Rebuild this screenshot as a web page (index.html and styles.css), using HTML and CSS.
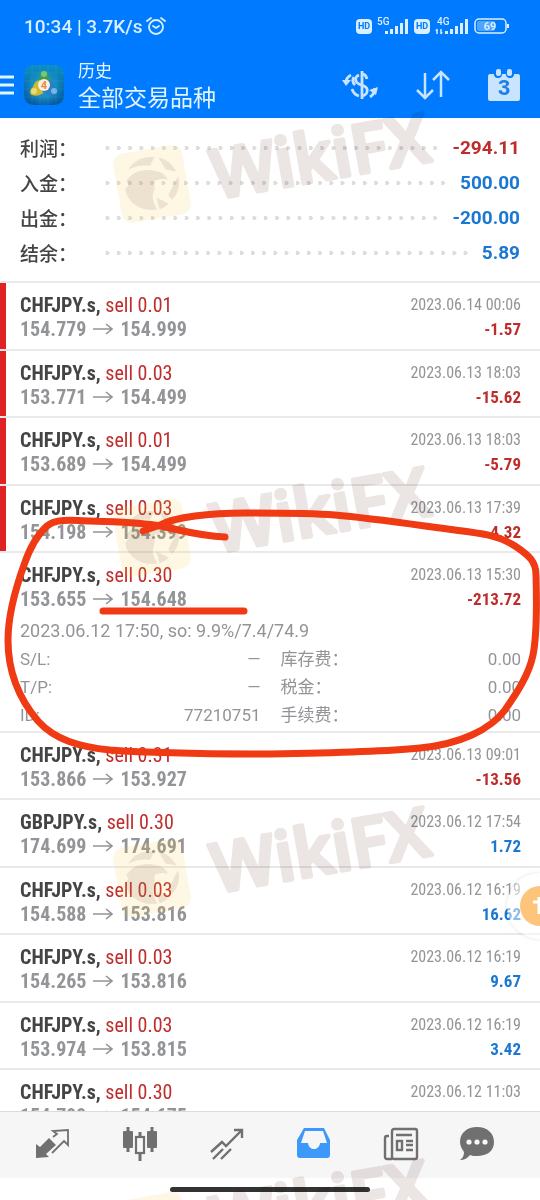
FILE: index.html
```
<!DOCTYPE html>
<html lang="zh-CN">
<head>
    <meta charset="UTF-8">
    <meta name="viewport" content="width=device-width, initial-scale=1">
    <title>历史</title>
    <link rel="stylesheet" href="styles.css">
</head>
<body>
    <svg class="defs" aria-hidden="true">
        <symbol id="arrow" viewBox="0 0 20 12">
            <path d="M0 6H19M13 1L19 6L13 11" fill="none" stroke="currentColor" stroke-width="1.6"/>
        </symbol>
    </svg>

    <div class="status-bar">
        <span class="clock">10:34 | 3.7K/s</span>
        <svg class="alarm" width="20" height="18" viewBox="0 0 20 18">
            <g fill="none" stroke="currentColor" stroke-width="1.8" stroke-linecap="round">
                <circle cx="10" cy="10" r="7"/>
                <path d="M1 4L5 1M19 4L15 1M7 9L10 11L13 9"/>
            </g>
        </svg>
        <div class="status-right">
            <span class="hd">HD</span>
            <svg width="32" height="18" viewBox="0 0 32 18">
                <text class="net" x="0" y="8">5G</text>
                <path d="M8 17v-3h3v3zM13 17v-5h3v5zM18 17V9h3v8zM23 17V6h3v11zM28 17V2h3v15z" fill="currentColor"/>
            </svg>
            <span class="hd">HD</span>
            <svg width="34" height="18" viewBox="0 0 34 18">
                <text class="net" x="2" y="8">4G</text>
                <path d="M2 12v5M1 14l1-2M6 12v5M7 15l-1 2" fill="none" stroke="currentColor" stroke-width="1.5"/>
                <path d="M10 17v-3h3v3zM15 17v-5h3v5zM20 17V9h3v8zM25 17V6h3v11zM30 17V2h3v15z" fill="currentColor"/>
            </svg>
            <svg class="battery" width="36" height="16" viewBox="0 0 36 16">
                <rect x="1" y="1" width="31" height="14" rx="4" fill="none" stroke="currentColor" stroke-width="1.5"/>
                <rect x="3" y="3" width="18" height="10" rx="2" fill="#4fa5ff"/>
                <path d="M34 6v4" stroke="currentColor" stroke-width="2"/>
                <text class="level" x="16" y="12" text-anchor="middle">69</text>
            </svg>
        </div>
    </div>

    <header class="header">
        <button class="menu" aria-label="菜单">
            <svg width="14" height="20" viewBox="0 0 14 20">
                <path d="M0 2H14M0 10H14M0 18H14" stroke="currentColor" stroke-width="3"/>
            </svg>
        </button>
        <svg class="logo" width="40" height="40" viewBox="0 0 40 40">
            <defs>
                <linearGradient id="tile" x1="0" y1="0" x2="0" y2="1">
                    <stop offset="0" stop-color="#0c8fc4"/>
                    <stop offset="1" stop-color="#06599f"/>
                </linearGradient>
                <radialGradient id="glow">
                    <stop offset="0" stop-color="#35c8e8"/>
                    <stop offset="1" stop-color="#35c8e8" stop-opacity="0"/>
                </radialGradient>
            </defs>
            <rect width="40" height="40" rx="9" fill="url(#tile)"/>
            <circle cx="20" cy="23" r="19" fill="url(#glow)" opacity=".7"/>
            <path d="M8 0V40M16 0V40M24 0V40M32 0V40M0 8H40M0 16H40M0 24H40M0 32H40" stroke="#5fc8ee" stroke-width=".5" opacity=".25"/>
            <path d="M13 19C13 14 16 13 16 10a4 4 0 0 1 8 0C24 13 28 14 28 19S24 24 20 24S13 23 13 19Z" fill="#3d9b55"/>
            <circle cx="20" cy="9" r="3" fill="#7ac57c"/>
            <path d="M16 15c-5 1-6 4-7 7c-3 2-4 7-1 8c4 2 10 0 13-4Z" fill="#cfb938"/>
            <circle cx="10" cy="26" r="3" fill="#f0dc6a"/>
            <path d="M25 15c5 2 5 5 6 7c3 2 4 7 0 8c-4 2-10 0-13-4Z" fill="#2b7fc4"/>
            <circle cx="30" cy="26" r="3" fill="#72b8e6"/>
            <circle cx="20" cy="20" r="6" fill="#f7efe4"/>
            <text class="logo-num" x="20" y="24" text-anchor="middle">4</text>
        </svg>
        <div class="titles">
            <div class="subtitle">历史</div>
            <h1 class="title">全部交易品种</h1>
        </div>
        <div class="actions">
            <button aria-label="货币">
                <svg width="36" height="30" viewBox="0 0 36 30">
                    <g fill="none" stroke="currentColor" stroke-width="2.8">
                        <path d="M20 1V29"/>
                        <path d="M25 9C24 5 22 4 20 4M17 5C12 7 13 12 17 14L22 16C27 18 26 25 20 26"/>
                        <path d="M10 19C11 22 13 25 17 26"/>
                        <path d="M9 5C5 7 4 9 4 13M12 7C10 10 11 13 13 15"/>
                        <path d="M28 27C31 25 33 22 33 18"/>
                    </g>
                    <path d="M0 10L9 10L4 16ZM27 20L36 17L34 25Z" fill="currentColor"/>
                </svg>
            </button>
            <button aria-label="排序">
                <svg width="34" height="30" viewBox="0 0 34 30">
                    <path d="M9 3V28M1 20L9 28L17 20M25 27V2M17 10L25 2L33 10" fill="none" stroke="currentColor" stroke-width="2.5"/>
                </svg>
            </button>
            <button aria-label="日期">
                <svg width="32" height="34" viewBox="0 0 32 34">
                    <path d="M2 6H6A4 4 0 0 0 14 6H18A4 4 0 0 0 26 6H30a2 2 0 0 1 2 2V31a2 2 0 0 1-2 2H2a2 2 0 0 1-2-2V8a2 2 0 0 1 2-2Z" fill="currentColor"/>
                    <rect x="8" y="1" width="5" height="7" rx="2" fill="currentColor"/>
                    <rect x="19" y="1" width="5" height="7" rx="2" fill="currentColor"/>
                    <text class="day" x="16" y="27" text-anchor="middle">3</text>
                </svg>
            </button>
        </div>
    </header>

    <main class="content">
        <section class="summary">
            <div class="sum-row"><span class="sum-label">利润：</span><span class="dots"></span><span class="sum-value loss">-294.11</span></div>
            <div class="sum-row"><span class="sum-label">入金：</span><span class="dots"></span><span class="sum-value gain">500.00</span></div>
            <div class="sum-row"><span class="sum-label">出金：</span><span class="dots"></span><span class="sum-value gain">-200.00</span></div>
            <div class="sum-row"><span class="sum-label">结余：</span><span class="dots"></span><span class="sum-value gain">5.89</span></div>
        </section>

        <ul class="deals">
            <li class="deal marked">
                <div class="line"><span><b class="symbol">CHFJPY.s,</b> <span class="side">sell 0.01</span></span><time>2023.06.14 00:06</time></div>
                <div class="line"><span class="prices">154.779 <svg class="arrow"><use href="#arrow"/></svg> 154.999</span><b class="profit loss">-1.57</b></div>
            </li>
            <li class="deal marked">
                <div class="line"><span><b class="symbol">CHFJPY.s,</b> <span class="side">sell 0.03</span></span><time>2023.06.13 18:03</time></div>
                <div class="line"><span class="prices">153.771 <svg class="arrow"><use href="#arrow"/></svg> 154.499</span><b class="profit loss">-15.62</b></div>
            </li>
            <li class="deal marked">
                <div class="line"><span><b class="symbol">CHFJPY.s,</b> <span class="side">sell 0.01</span></span><time>2023.06.13 18:03</time></div>
                <div class="line"><span class="prices">153.689 <svg class="arrow"><use href="#arrow"/></svg> 154.499</span><b class="profit loss">-5.79</b></div>
            </li>
            <li class="deal marked">
                <div class="line"><span><b class="symbol">CHFJPY.s,</b> <span class="side">sell 0.03</span></span><time>2023.06.13 17:39</time></div>
                <div class="line"><span class="prices">154.198 <svg class="arrow"><use href="#arrow"/></svg> 154.399</span><b class="profit loss">-4.32</b></div>
            </li>
            <li class="deal">
                <div class="line"><span><b class="symbol">CHFJPY.s,</b> <span class="side">sell 0.30</span></span><time>2023.06.13 15:30</time></div>
                <div class="line"><span class="prices">153.655 <svg class="arrow"><use href="#arrow"/></svg> 154.648</span><b class="profit loss">-213.72</b></div>
                <div class="details">
                    <div class="note">2023.06.12 17:50, so: 9.9%/7.4/74.9</div>
                    <div class="pair"><span>S/L:</span><span>—</span></div>
                    <div class="pair"><span>库存费：</span><span>0.00</span></div>
                    <div class="pair"><span>T/P:</span><span>—</span></div>
                    <div class="pair"><span>税金：</span><span>0.00</span></div>
                    <div class="pair"><span>ID:</span><span>77210751</span></div>
                    <div class="pair"><span>手续费：</span><span>0.00</span></div>
                </div>
            </li>
            <li class="deal">
                <div class="line"><span><b class="symbol">CHFJPY.s,</b> <span class="side">sell 0.31</span></span><time>2023.06.13 09:01</time></div>
                <div class="line"><span class="prices">153.866 <svg class="arrow"><use href="#arrow"/></svg> 153.927</span><b class="profit loss">-13.56</b></div>
            </li>
            <li class="deal">
                <div class="line"><span><b class="symbol">GBPJPY.s,</b> <span class="side">sell 0.30</span></span><time>2023.06.12 17:54</time></div>
                <div class="line"><span class="prices">174.699 <svg class="arrow"><use href="#arrow"/></svg> 174.691</span><b class="profit gain">1.72</b></div>
            </li>
            <li class="deal">
                <div class="line"><span><b class="symbol">CHFJPY.s,</b> <span class="side">sell 0.03</span></span><time>2023.06.12 16:19</time></div>
                <div class="line"><span class="prices">154.588 <svg class="arrow"><use href="#arrow"/></svg> 153.816</span><b class="profit gain">16.62</b></div>
            </li>
            <li class="deal">
                <div class="line"><span><b class="symbol">CHFJPY.s,</b> <span class="side">sell 0.03</span></span><time>2023.06.12 16:19</time></div>
                <div class="line"><span class="prices">154.265 <svg class="arrow"><use href="#arrow"/></svg> 153.816</span><b class="profit gain">9.67</b></div>
            </li>
            <li class="deal">
                <div class="line"><span><b class="symbol">CHFJPY.s,</b> <span class="side">sell 0.03</span></span><time>2023.06.12 16:19</time></div>
                <div class="line"><span class="prices">153.974 <svg class="arrow"><use href="#arrow"/></svg> 153.815</span><b class="profit gain">3.42</b></div>
            </li>
            <li class="deal">
                <div class="line"><span><b class="symbol">CHFJPY.s,</b> <span class="side">sell 0.30</span></span><time>2023.06.12 11:03</time></div>
                <div class="line"><span class="prices">154.799 <svg class="arrow"><use href="#arrow"/></svg> 154.675</span></div>
            </li>
        </ul>
    </main>

    <nav class="tabs">
        <button aria-label="行情">
            <svg width="36" height="34" viewBox="0 0 36 34">
                <path d="M1 31V17L5 20L14 11L21 18L11 27L14 30Z" fill="currentColor"/>
                <path d="M17 26L29 14L33 18V3L18 4L22 7L18 10" fill="none" stroke="currentColor" stroke-width="1.8"/>
            </svg>
        </button>
        <button aria-label="图表">
            <svg width="36" height="34" viewBox="0 0 36 34">
                <path d="M6 0V25M30 0V25M18 5V11M18 27V34" stroke="currentColor" stroke-width="3"/>
                <rect x="1" y="4" width="10" height="17" rx="1" fill="currentColor"/>
                <rect x="25" y="4" width="10" height="17" rx="1" fill="currentColor"/>
                <rect x="14" y="10" width="8" height="16" fill="none" stroke="currentColor" stroke-width="2.2"/>
            </svg>
        </button>
        <button aria-label="交易">
            <svg width="36" height="34" viewBox="0 0 36 34">
                <g fill="none" stroke="currentColor" stroke-width="2.4">
                    <path d="M2 25L13 15L17 19L33 3M25 3H33V11"/>
                    <path d="M4 32L14 22M12 32L22 22"/>
                </g>
            </svg>
        </button>
        <button class="active" aria-label="历史">
            <svg width="36" height="34" viewBox="0 0 36 34">
                <path fill-rule="evenodd" d="M8 1H28L34 13V28a3 3 0 0 1-3 3H4a3 3 0 0 1-3-3V13ZM9 4L5 16H12C13 24 23 24 24 16H31L27 4Z" fill="currentColor"/>
            </svg>
        </button>
        <button aria-label="新闻">
            <svg width="36" height="34" viewBox="0 0 36 34">
                <g fill="none" stroke="currentColor" stroke-width="2.4">
                    <rect x="9" y="2" width="25" height="30" rx="2"/>
                    <path d="M9 32H4a2 2 0 0 1-2-2V11a2 2 0 0 1 2-2H6"/>
                    <rect x="14" y="14" width="5" height="9"/>
                    <path d="M13 8H29M23 14H30M23 18H30M23 23H30"/>
                </g>
            </svg>
        </button>
        <button aria-label="消息">
            <svg width="36" height="34" viewBox="0 0 36 34">
                <path d="M18 0C28 0 35 6 35 15S28 29 18 29C15 29 13 29 11 28C9 31 5 33 1 33C4 31 5 28 5 25C3 22 1 19 1 15C1 6 8 0 18 0Z" fill="currentColor"/>
                <g fill="#f7f7f7">
                    <circle cx="10" cy="15" r="2.6"/>
                    <circle cx="18" cy="15" r="2.6"/>
                    <circle cx="26" cy="15" r="2.6"/>
                </g>
            </svg>
        </button>
    </nav>
    <div class="home"><span class="handle"></span></div>

    <!-- watermark, repeated down the screen -->
    <svg class="overlay" aria-hidden="true">
        <defs>
            <g id="mark">
                <g transform="rotate(-10 152 184)">
                    <path fill="#f5c83c" fill-opacity=".14" d="M127 149H177a10 10 0 0 1 10 10V209a10 10 0 0 1-10 10H127a10 10 0 0 1-10-10V159a10 10 0 0 1 10-10Z"/>
                    <g fill="#78504b" fill-opacity=".13">
                        <path d="M127 177C134 168 148 167 158 172C164 174 168 178 168 183C164 180 160 181 156 181C153 184 155 187 153 191C149 197 150 203 153 210C136 210 124 197 125 184L129 181Z"/>
                        <path d="M131 166C138 157 150 155 159 158L153 166C145 163 138 164 131 166Z"/>
                        <path d="M163 159C171 162 176 169 178 176L168 172Z"/>
                        <path d="M179 181C180 190 176 198 169 203L166 198Z"/>
                        <path d="M154 198L165 206C161 209 157 210 155 210Z"/>
                    </g>
                </g>
                <text class="mark-text" transform="translate(216 199) rotate(-10)">WikiFX</text>
            </g>
        </defs>
        <use href="#mark"/>
        <use href="#mark" y="354"/>
        <use href="#mark" y="694"/>
        <use href="#mark" y="1047"/>
    </svg>

    <button class="assist" aria-label="辅助">
        <svg width="20" height="40" viewBox="0 0 20 40">
            <circle cx="20" cy="20" r="20" fill="#fdc47c"/>
            <path d="M13 16H20M19 11V28" fill="none" stroke="#fff" stroke-width="3"/>
        </svg>
    </button>

    <!-- hand drawn marker -->
    <svg class="overlay" aria-hidden="true">
        <g fill="none" stroke="#f03a14" stroke-width="7" stroke-linecap="round" stroke-linejoin="round">
            <path d="M225 537C200 536 180 530 160 526C140 522 115 522 90 521C70 520 55 519 47 526C36 536 29 550 24 565C15 590 8 615 8 640C8 675 20 700 38 721C55 740 80 747 110 750C150 753 200 754 270 754C330 753 380 752 420 748C460 744 490 730 505 710C516 694 529 675 533 655C537 635 537 610 536 575C536 562 530 556 515 546C498 535 480 533 455 530C410 524 370 518 335 515C310 513 280 513 245 513C210 513 175 517 160 525L143 531"/>
            <path d="M103 611H244"/>
        </g>
    </svg>
</body>
</html>
```
FILE: styles.css
```
* {
    box-sizing: border-box;
}
body {
    font-family: Roboto, "Noto Sans CJK SC", sans-serif;
    background-color: #fff;
    color: #444;
    display: flex;
    flex-direction: column;
    height: 100vh;
    margin: 0;
    position: relative;
    overflow: hidden;
}
button {
    border: none;
    background: none;
    padding: 0;
    color: inherit;
    cursor: pointer;
}
svg {
    display: block;
}
.defs {
    position: absolute;
    width: 0;
    height: 0;
}

/* status bar */
.status-bar {
    display: flex;
    align-items: center;
    height: 52px;
    padding: 0 30px 0 24px;
    background-color: #007aff;
    color: #d8f0ff;
    flex-shrink: 0;
}
.clock {
    font-size: 19px;
    font-weight: 500;
}
.alarm {
    margin-left: 4px;
}
.status-right {
    display: flex;
    align-items: center;
    gap: 5px;
    margin-left: auto;
}
.hd {
    width: 16px;
    height: 15px;
    border-radius: 4px;
    background-color: #d8f0ff;
    color: #007aff;
    font-size: 9px;
    line-height: 15px;
    font-weight: 700;
    text-align: center;
}
.net {
    font-size: 10px;
    font-weight: 500;
    fill: currentColor;
}
.level {
    font-size: 11px;
    font-weight: 700;
    fill: currentColor;
}

/* header */
.header {
    display: flex;
    align-items: center;
    height: 66px;
    padding-right: 20px;
    background-color: #007aff;
    color: #e2f4ff;
    flex-shrink: 0;
}
.logo {
    margin-left: 10px;
}
.logo-num {
    font-size: 11px;
    font-weight: 700;
    fill: #ef8a3a;
}
.titles {
    margin-left: 14px;
    padding-top: 3px;
}
.subtitle {
    font-size: 17px;
    line-height: 24px;
}
.title {
    margin: 0;
    font-size: 23px;
    line-height: 32px;
    font-weight: 400;
}
.actions {
    display: flex;
    align-items: center;
    gap: 38px;
    margin-left: auto;
    color: #c8e4ff;
}
.day {
    font-size: 22px;
    font-weight: 700;
    fill: #1a7fe8;
}

/* content */
.content {
    flex: 1;
    min-height: 0;
    overflow: hidden;
}
.summary {
    padding: 12px 20px 11px;
    border-bottom: 2px solid #e9e9e9;
}
.sum-row {
    display: flex;
    align-items: center;
    height: 35px;
}
.sum-label {
    width: 82px;
    font-size: 19px;
    font-weight: 500;
}
.dots {
    flex: 1;
    height: 4px;
    margin-right: 11px;
    background-image: radial-gradient(circle, #dcdcdc 2px, transparent 2px);
    background-size: 11px 4px;
    background-repeat: space;
}
.sum-value {
    font-size: 19px;
    font-weight: 700;
}
.loss {
    color: #bf2c2c;
}
.gain {
    color: #1a78d2;
}
.deals {
    list-style: none;
    margin: 0;
    padding: 0;
    font-family: "Roboto Condensed", "Liberation Sans Narrow", sans-serif;
}
.deal {
    padding: 10px 19px 10px 20px;
    background: linear-gradient(#e9e9e9, #e9e9e9) 0 100% / 100% 2px no-repeat;
}
.deal:nth-child(even) {
    padding-bottom: 9px;
}
.marked {
    background:
        linear-gradient(#e9e9e9, #e9e9e9) 0 100% / 100% 2px no-repeat,
        linear-gradient(#df2224, #df2224) 0 0 / 6px 100% no-repeat;
}
.line {
    display: flex;
    justify-content: space-between;
    height: 24px;
    line-height: 24px;
    font-size: 20px;
}
.side {
    color: #bf2c2c;
}
.prices {
    display: flex;
    align-items: center;
    gap: 7px;
    color: #929497;
    font-weight: 700;
}
.arrow {
    width: 20px;
    height: 12px;
}
time {
    font-size: 16px;
    color: #929497;
}
.profit {
    font-size: 17px;
}
.details {
    display: grid;
    grid-template-columns: 1fr 1fr;
    column-gap: 20px;
    margin: 6px 0 -6px;
    font-family: Roboto, "Noto Sans CJK SC", sans-serif;
    font-size: 17px;
    line-height: 28px;
    color: #929497;
}
.note {
    grid-column: 1 / 3;
    height: 28px;
    font-size: 18px;
}
.pair {
    display: flex;
    justify-content: space-between;
    height: 28px;
}

/* bottom */
.tabs {
    display: grid;
    grid-template-columns: repeat(5, 87fr) 65fr;
    align-items: center;
    justify-items: center;
    height: 67px;
    padding: 0 31px 2px 10px;
    background-color: #f6f6f6;
    border-top: 1px solid #dcdcdc;
    color: #707070;
    flex-shrink: 0;
}
.tabs .active {
    color: #3d98fc;
}
.home {
    display: flex;
    justify-content: center;
    align-items: center;
    height: 22px;
    flex-shrink: 0;
}
.handle {
    width: 37%;
    height: 5px;
    border-radius: 3px;
    background-color: #333;
}

/* layers over the page */
.overlay {
    position: absolute;
    top: 0;
    left: 0;
    width: 100%;
    height: 100%;
    pointer-events: none;
}
.mark-text {
    font-family: "Open Sans", sans-serif;
    font-size: 68px;
    font-weight: 600;
    fill: #ebe5e4;
    stroke: #ebe5e4;
    stroke-width: 4;
    stroke-linejoin: round;
    mix-blend-mode: multiply;
}
.assist {
    position: absolute;
    top: 873px;
    right: 0;
    width: 33px;
    height: 66px;
    padding: 13px 0 13px 13px;
    border-radius: 33px 0 0 33px;
    background-color: rgba(255, 255, 255, 0.5);
    box-shadow: 0 0 4px rgba(0, 0, 0, 0.12);
}
```
